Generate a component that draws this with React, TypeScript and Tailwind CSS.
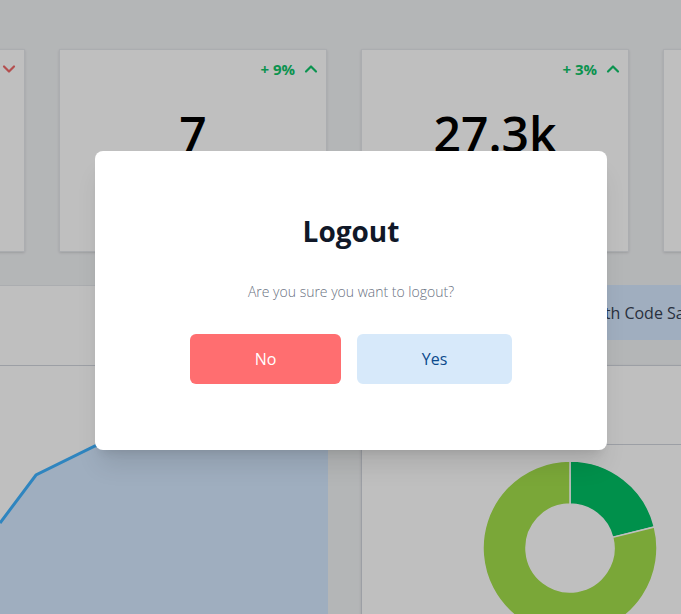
import { ChevronDown, ChevronUp } from "lucide-react";

const stats = [
  { value: "12", change: "- 4%", up: false },
  { value: "7", change: "+ 9%", up: true },
  { value: "27.3k", change: "+ 3%", up: true },
  { value: "318", change: "+ 1%", up: true },
];

const StatCard = ({ value, change, up }: { value: string; change: string; up: boolean }) => (
  <div className="w-[268px] h-[203px] shrink-0 bg-white border border-gray-200 shadow-sm flex flex-col">
    <div className="flex justify-end items-center gap-[6px] pt-[2px] pr-[5px] h-[36px] shrink-0">
      <span className={up ? "text-[15px] font-bold text-[#0fc46a]" : "text-[15px] font-bold text-[#f06868]"}>
        {change}
      </span>
      {up ? (
        <ChevronUp size={20} strokeWidth={2.6} className="text-[#0fc46a]" />
      ) : (
        <ChevronDown size={20} strokeWidth={2.6} className="text-[#f06868]" />
      )}
    </div>
    <div className="flex justify-center pt-[20px]">
      <span className="text-[48px] leading-[56px] font-semibold text-black">{value}</span>
    </div>
  </div>
);

// donut segment path between two angles (degrees, clockwise from 12 o'clock)
const arc = (cx: number, cy: number, r1: number, r2: number, a0: number, a1: number) => {
  const p = (r: number, a: number) => {
    const t = ((a - 90) * Math.PI) / 180;
    return `${cx + r * Math.cos(t)} ${cy + r * Math.sin(t)}`;
  };
  const large = a1 - a0 > 180 ? 1 : 0;
  return `M ${p(r2, a0)} A ${r2} ${r2} 0 ${large} 1 ${p(r2, a1)} L ${p(r1, a1)} A ${r1} ${r1} 0 ${large} 0 ${p(r1, a0)} Z`;
};

const Donut = () => (
  <svg width="190" height="190" viewBox="0 0 190 190">
    <path d={arc(95, 95, 44, 87, 0, 76)} fill="#00c164" stroke="#fff" strokeWidth="1.5" />
    <path d={arc(95, 95, 44, 87, 76, 359.99)} fill="#a3df4b" stroke="#fff" strokeWidth="1.5" />
  </svg>
);

export default function App() {
  return (
    <div
      className="relative w-[681px] h-[614px] overflow-hidden bg-[#f1f3f5]"
      style={{ fontFamily: '"Open Sans", "Noto Sans", sans-serif' }}
    >
      <div className="flex flex-col">
        <div className="flex gap-[34px] pt-[49px] -ml-[243px]">
          {stats.map((s) => (
            <StatCard key={s.value} {...s} />
          ))}
        </div>

        <div className="flex gap-[33px] pt-[33px]">
          <div className="w-[328px] h-[340px] shrink-0 bg-white border-t border-gray-200 flex flex-col overflow-hidden">
            <div className="h-[80px] shrink-0 border-b border-gray-300" />
            <svg width="328" height="260" viewBox="0 0 328 260" className="shrink-0">
              <path
                d="M0 157 L36 109 L95 80 L160 60 L230 48 L328 35 L328 260 L0 260 Z"
                fill="#d5e9ff"
              />
              <path
                d="M0 157 L36 109 L95 80 L160 60 L230 48 L328 35"
                fill="none"
                stroke="#3fb2ff"
                strokeWidth="3"
              />
            </svg>
          </div>

          <div className="w-[400px] shrink-0 flex flex-col">
            <div className="h-[55px] shrink-0 flex pl-[194px]">
              <div className="h-full flex items-center px-4 bg-[#d6e9ff] text-gray-700 text-base whitespace-nowrap">
                Health Code Sales
              </div>
            </div>
            <div className="mt-[25px] h-[260px] shrink-0 bg-white border border-gray-300 shadow-sm flex flex-col overflow-hidden">
              <div className="h-[79px] shrink-0 border-b border-gray-300" />
              <div className="flex pl-[113px] pt-[8px] shrink-0">
                <Donut />
              </div>
            </div>
          </div>
        </div>
      </div>

      <div className="absolute inset-0 bg-black/25" />

      <div className="absolute left-[95px] top-[151px] w-[512px] h-[299px] bg-white rounded-lg shadow-xl flex flex-col items-center pt-[62px]">
        <h2 className="text-[28px] leading-[36px] font-bold text-gray-900">Logout</h2>
        <p className="mt-[33px] text-sm font-light text-gray-500">Are you sure you want to logout?</p>
        <div className="flex gap-4 mt-[32px]">
          <button className="w-[151px] h-[50px] rounded-md bg-[#ff6e70] text-white text-base font-medium">
            No
          </button>
          <button className="w-[155px] h-[50px] rounded-md bg-[#d7e9fa] text-[#0b4a8c] text-base font-medium">
            Yes
          </button>
        </div>
      </div>
    </div>
  );
}
